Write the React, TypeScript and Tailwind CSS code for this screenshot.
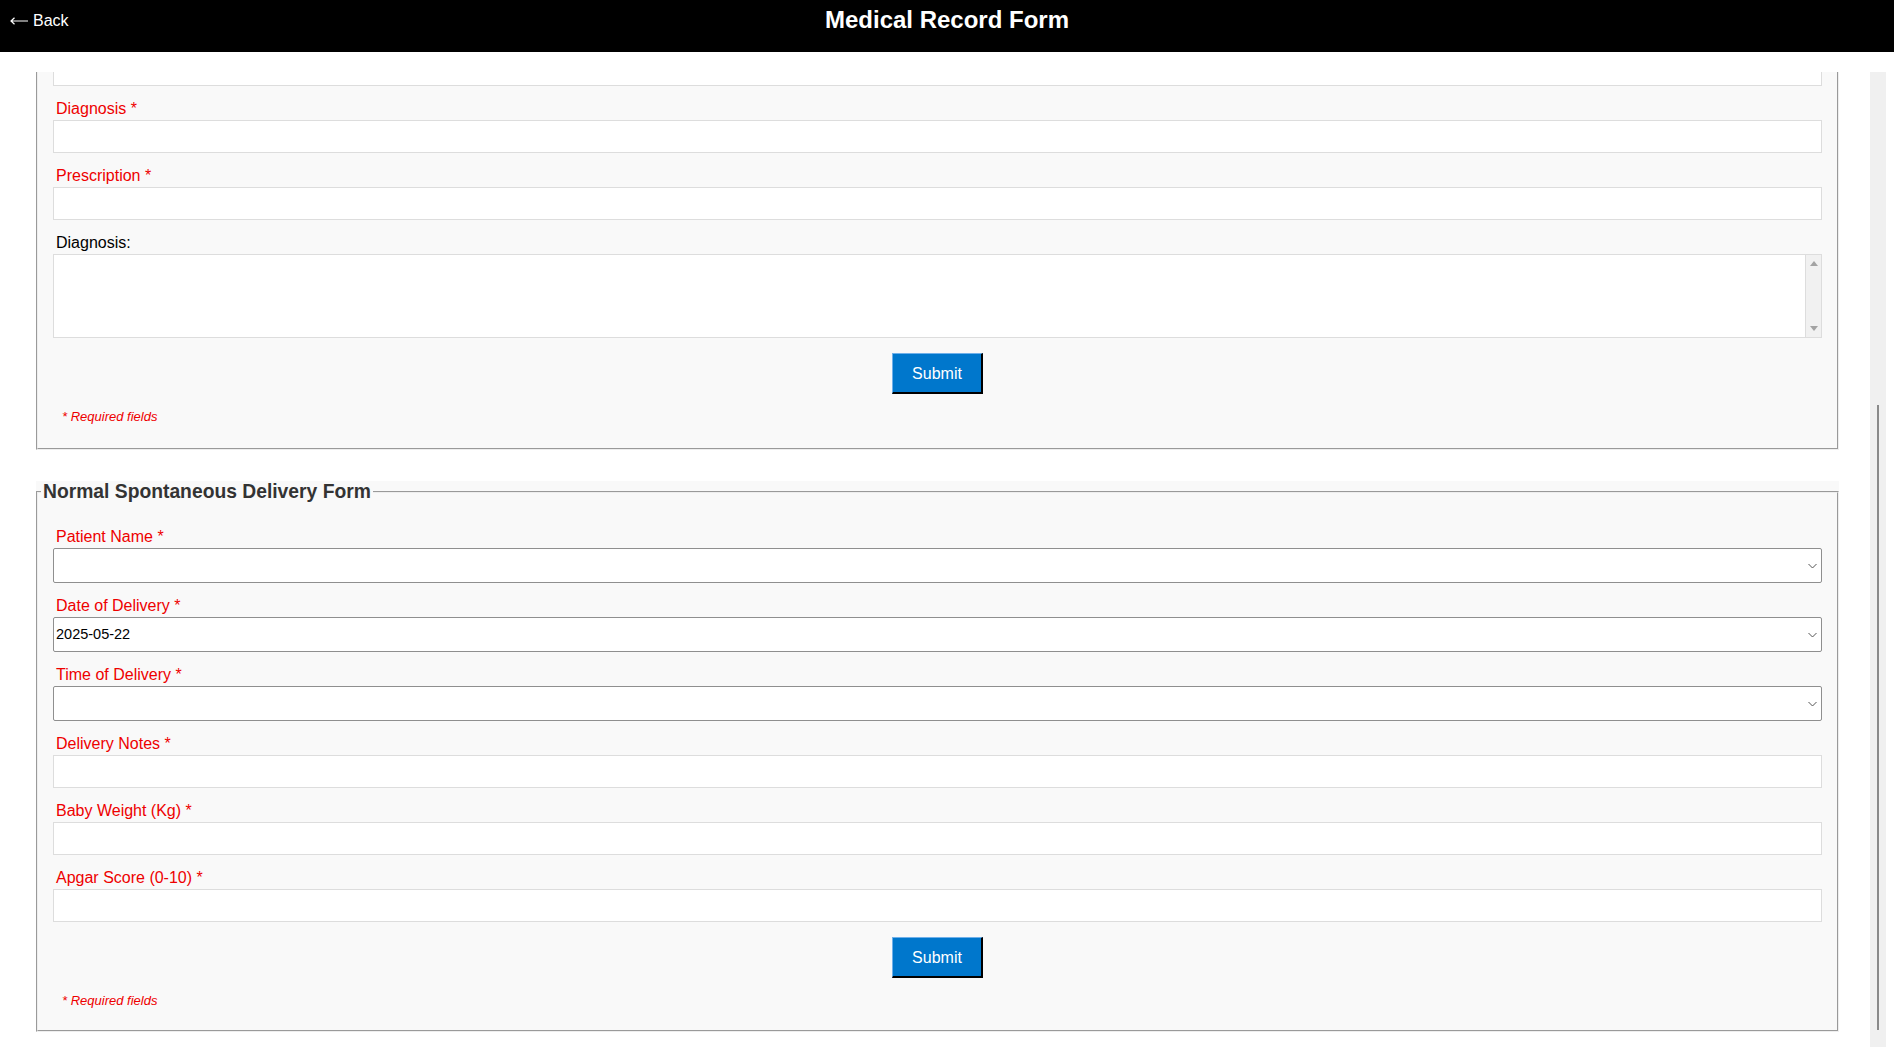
import React from 'react';

const Label: React.FC<{ text: string; required?: boolean }> = ({ text, required = true }) => (
  <label
    className={`block pl-[3px] pt-[1px] mb-[2px] text-[16px] leading-[18px] ${
      required ? 'text-[#e00]' : 'text-black'
    }`}
  >
    {text}
  </label>
);

const TextField: React.FC<{ label: string; first?: boolean }> = ({ label, first }) => (
  <div className={first ? '' : 'mt-[13px]'}>
    <Label text={label} />
    <input
      type="text"
      className="block w-full h-[33px] border border-[#ddd] bg-white px-[3px] outline-none"
    />
  </div>
);

const Chevron = () => (
  <svg
    width="9"
    height="6"
    viewBox="0 0 9 6"
    className="absolute right-[5px] top-1/2 -translate-y-1/2 pointer-events-none"
  >
    <path d="M0.5 1 L4.5 5 L8.5 1" fill="none" stroke="#555" strokeWidth="1" />
  </svg>
);

const SelectField: React.FC<{ label: string; value?: string; first?: boolean }> = ({
  label,
  value,
  first,
}) => (
  <div className={first ? '' : 'mt-[13px]'}>
    <Label text={label} />
    <div className="relative">
      <select
        defaultValue={value ?? ''}
        className="appearance-none block w-full h-[35px] border border-[#8f8f8f] rounded-[2px] bg-white pl-[2px] text-[14.5px] text-black outline-none"
      >
        <option value="">{''}</option>
        {value && <option value={value}>{value}</option>}
      </select>
      <Chevron />
    </div>
  </div>
);

const SubmitButton = () => (
  <button
    type="button"
    className="block mx-auto mt-[15px] w-[91px] h-[41px] pt-[1px] bg-[#0077cc] text-white text-[16px] border-t border-l border-b-2 border-r-2 border-t-[#6fb0ea] border-l-[#6fb0ea] border-b-black border-r-black"
  >
    Submit
  </button>
);

const RequiredNote = () => (
  <p className="mt-[15px] pl-[9px] italic text-[13px] leading-[15px] text-[#e00]">
    * Required fields
  </p>
);

const BackArrow = () => (
  <svg width="18" height="8" viewBox="0 0 18 8" className="inline-block mr-[5px] align-[1px]">
    <path d="M1 4 H18 M4.5 0.8 L1 4 L4.5 7.2" fill="none" stroke="#fff" strokeWidth="1.2" />
  </svg>
);

export default function App() {
  return (
    <div className="h-screen overflow-hidden bg-white font-['Liberation_Sans',Arial,sans-serif]">
      <header className="h-[52px] bg-black text-white grid grid-cols-[1fr_auto_1fr]">
        <div className="pl-[10px] pt-[12px] text-[16px] leading-[18px] whitespace-nowrap">
          <BackArrow />
          Back
        </div>
        <h1 className="pt-[6px] text-[24px] font-bold leading-[28px]">Medical Record Form</h1>
        <div />
      </header>

      <div className="flex pt-[20px]">
        <main className="ml-[36px] w-[1803px] h-[988px] overflow-hidden">
          {/* consultation form, scrolled part way */}
          <fieldset className="bg-[#f9f9f9] border-2 border-t-0 border-[#eee] [--tw-border-style:groove] [border-style:groove] px-[15px] pb-[24px]">
            <div className="h-[14px] border border-t-0 border-[#ddd] bg-white" />
            <TextField label="Diagnosis *" />
            <TextField label="Prescription *" />
            <div className="mt-[13px]">
              <Label text="Diagnosis:" required={false} />
              <div className="flex h-[84px] border border-[#ddd] bg-white">
                <textarea className="flex-1 resize-none outline-none bg-white px-[3px]" />
                <div className="w-[16px] bg-[#f1f1f1] border-l border-[#ddd] flex flex-col items-center justify-between py-[6px]">
                  <svg width="8" height="5" viewBox="0 0 8 5">
                    <path d="M0 5 L4 0 L8 5 Z" fill="#a3a3a3" />
                  </svg>
                  <svg width="8" height="5" viewBox="0 0 8 5">
                    <path d="M0 0 L8 0 L4 5 Z" fill="#a3a3a3" />
                  </svg>
                </div>
              </div>
            </div>
            <SubmitButton />
            <RequiredNote />
          </fieldset>

          <div className="mt-[31px] bg-[#f9f9f9]">
            <fieldset className="border-2 border-[#eee] [--tw-border-style:groove] [border-style:groove]">
              <legend className="ml-[3px] px-[2px] text-[19.3px] leading-[22px] font-bold text-[#333]">
                Normal Spontaneous Delivery Form
              </legend>
              <div className="px-[15px] pt-[24px] pb-[22px]">
                <SelectField label="Patient Name *" first />
                <SelectField label="Date of Delivery *" value="2025-05-22" />
                <SelectField label="Time of Delivery *" />
                <TextField label="Delivery Notes *" />
                <TextField label="Baby Weight (Kg) *" />
                <TextField label="Apgar Score (0-10) *" />
                <SubmitButton />
                <RequiredNote />
              </div>
            </fieldset>
          </div>
        </main>

        <div className="ml-[31px] w-[16px] h-[975px] bg-[#f0f0f0] flex justify-center pt-[333px]">
          <div className="w-[2px] h-[625px] bg-[#8a8a8a]" />
        </div>
      </div>
    </div>
  );
}
